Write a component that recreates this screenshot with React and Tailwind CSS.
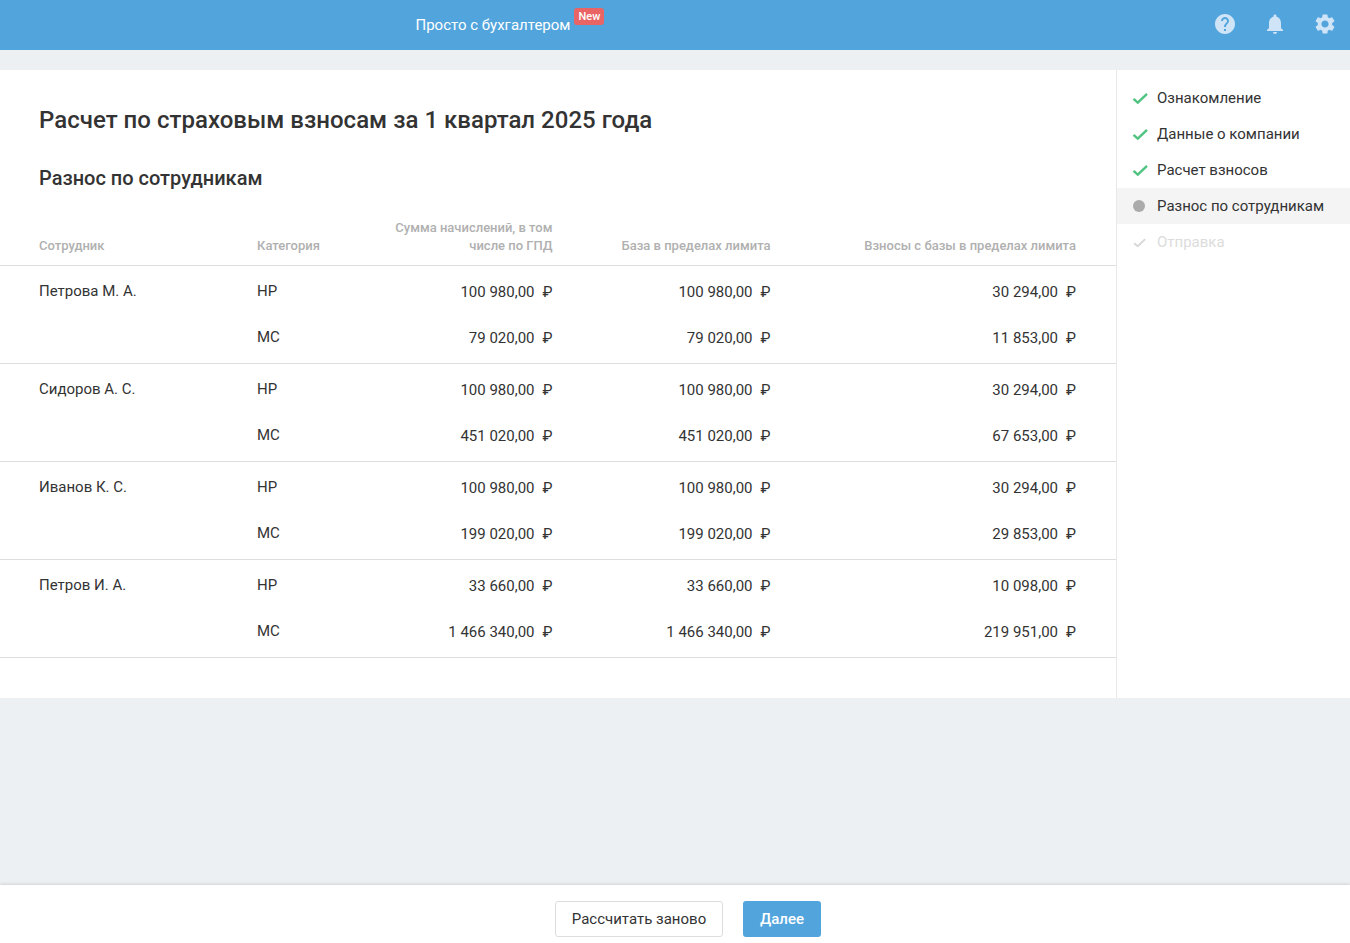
import React from 'react';
import { MdHelp, MdNotifications, MdSettings } from 'react-icons/md';

const rows = [
  { name: 'Петрова М. А.', lines: [['НР', '100 980,00', '100 980,00', '30 294,00'], ['МС', '79 020,00', '79 020,00', '11 853,00']] },
  { name: 'Сидоров А. С.', lines: [['НР', '100 980,00', '100 980,00', '30 294,00'], ['МС', '451 020,00', '451 020,00', '67 653,00']] },
  { name: 'Иванов К. С.', lines: [['НР', '100 980,00', '100 980,00', '30 294,00'], ['МС', '199 020,00', '199 020,00', '29 853,00']] },
  { name: 'Петров И. А.', lines: [['НР', '33 660,00', '33 660,00', '10 098,00'], ['МС', '1 466 340,00', '1 466 340,00', '219 951,00']] },
];

const steps = [
  { label: 'Ознакомление', state: 'done' },
  { label: 'Данные о компании', state: 'done' },
  { label: 'Расчет взносов', state: 'done' },
  { label: 'Разнос по сотрудникам', state: 'current' },
  { label: 'Отправка', state: 'todo' },
];

const Check = ({ className }) => (
  <svg viewBox="0 0 16 16" className={className} fill="none" stroke="currentColor" strokeWidth="2.4">
    <path d="M1.5 8.8 L5.8 12.6 L15 3.8" />
  </svg>
);

const Money = ({ value }) => (
  <div className="flex justify-end gap-2 pt-px">
    <span>{value}</span>
    <span>₽</span>
  </div>
);

const App = () => {
  return (
    <div className="h-[943px] flex flex-col bg-[#edf0f2] font-['Roboto',sans-serif] text-[15px] text-[#333333] overflow-hidden">
      {/* Header */}
      <header className="h-[50px] shrink-0 bg-[#52a5dc] flex items-center relative">
        <div className="ml-[415.5px] flex items-start">
          <span className="text-white text-[15px] leading-[50px]">Просто с бухгалтером</span>
          <span className="ml-[4px] mt-[8px] h-[17px] px-[4px] rounded-[3px] bg-[#e96464] text-white text-[11px] font-medium leading-[17px]">New</span>
        </div>
        <div className="ml-auto flex items-center gap-[26px] pr-[13px] pb-[2px] text-[#cfe5f7]">
          <MdHelp size={24} />
          <MdNotifications size={24} />
          <MdSettings size={24} />
        </div>
      </header>

      {/* Content */}
      <div className="mt-[20px] h-[628px] shrink-0 flex bg-white">
        <main className="w-[1116px] shrink-0 border-r border-[#e8e8e8] box-content">
          <h1 className="pl-[39px] pt-[34px] text-[24px] leading-[32px] font-medium tracking-[0.02px]">Расчет по страховым взносам за 1 квартал 2025 года</h1>
          <h2 className="pl-[39px] mt-[28px] text-[20px] leading-[28px] font-medium">Разнос по сотрудникам</h2>

          <div className="mt-[22px] grid grid-cols-[218px_120px_175.5px_218px_305.5px] pl-[39px] h-[52px] items-end pb-[10px] border-b border-[#dedede] text-[13px] leading-[18px] font-medium text-[#b0b0b0]">
            <div>Сотрудник</div>
            <div>Категория</div>
            <div className="text-right">Сумма начислений, в том числе по ГПД</div>
            <div className="text-right">База в пределах лимита</div>
            <div className="text-right">Взносы с базы в пределах лимита</div>
          </div>

          {rows.map((row) => (
            <div key={row.name} className="pt-[2px] pb-[3px] border-b border-[#dedede]">
              {row.lines.map((line, i) => (
                <div key={line[0]} className="grid grid-cols-[218px_120px_175.5px_218px_305.5px] pl-[39px] h-[46px] items-center leading-[20px]">
                  <div>{i === 0 ? row.name : ''}</div>
                  <div>{line[0]}</div>
                  <Money value={line[1]} />
                  <Money value={line[2]} />
                  <Money value={line[3]} />
                </div>
              ))}
            </div>
          ))}
        </main>

        <aside className="flex-1 pt-[10px]">
          {steps.map((step) => (
            <div
              key={step.label}
              className={`h-[36px] flex items-center pl-[15px] ${step.state === 'current' ? 'bg-[#f4f4f4]' : ''} ${step.state === 'todo' ? 'text-[#dcdcdc]' : ''}`}
            >
              <div className="w-[25px] flex items-center">
                {step.state === 'done' && <Check className="w-[16px] h-[16px] text-[#4fc37f]" />}
                {step.state === 'current' && <div className="ml-px w-[12px] h-[12px] rounded-full bg-[#ababab]" />}
                {step.state === 'todo' && <Check className="ml-px w-[13px] h-[13px] text-[#d8d8d8]" />}
              </div>
              <span>{step.label}</span>
            </div>
          ))}
        </aside>
      </div>

      {/* Footer */}
      <footer className="mt-auto h-[58px] shrink-0 bg-white shadow-[0_-1px_3px_rgba(0,0,0,0.12)] flex items-start justify-center gap-[20px] pt-[16px] pl-[26px]">
        <button className="w-[168px] h-[36px] rounded-[3px] border border-[#dddddd] bg-white text-[15px] text-[#333333]">Рассчитать заново</button>
        <button className="w-[78px] h-[36px] rounded-[3px] bg-[#52a5dc] text-white text-[15px] font-medium">Далее</button>
      </footer>
    </div>
  );
};

export default App;
